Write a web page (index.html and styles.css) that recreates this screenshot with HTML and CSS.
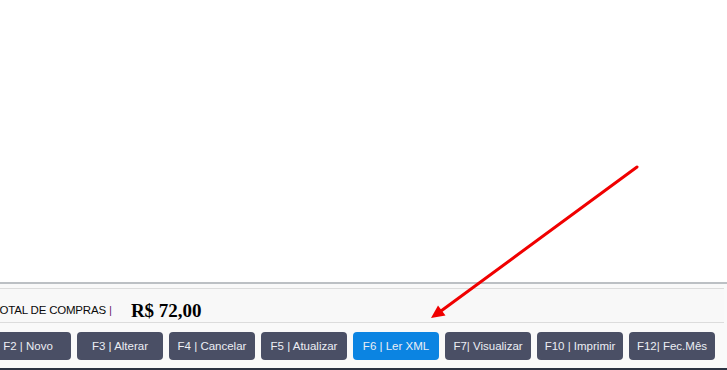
FILE: index.html
```html
<!DOCTYPE html>
<html lang="pt-BR">
<head>
    <meta charset="UTF-8">
    <meta name="viewport" content="width=device-width, initial-scale=1.0">
    <title>Compras</title>
    <link rel="stylesheet" href="styles.css">
</head>
<body>
    <div class="app">
        <div class="grid-area"></div>
        <div class="footer">
            <div class="total">
                <span class="total-label">TOTAL DE COMPRAS</span>
                <span class="sep">|</span>
                <span class="total-value">R$ 72,00</span>
            </div>
            <div class="actions">
                <button class="btn">F2 | Novo</button>
                <button class="btn">F3 | Alterar</button>
                <button class="btn">F4 | Cancelar</button>
                <button class="btn">F5 | Atualizar</button>
                <button class="btn btn-active">F6 | Ler XML</button>
                <button class="btn">F7| Visualizar</button>
                <button class="btn">F10 | Imprimir</button>
                <button class="btn">F12| Fec.Mês</button>
            </div>
        </div>
        <div class="statusbar"></div>
    </div>

    <svg class="arrow" width="727" height="370" viewBox="0 0 727 370">
        <line x1="637" y1="167" x2="441" y2="311" stroke="#f00000" stroke-width="3" stroke-linecap="round"/>
        <polygon points="431,318 438,305.5 445.5,315.5" fill="#f00000"/>
    </svg>
</body>
</html>
```

FILE: styles.css
```css
html, body {
    margin: 0;
    padding: 0;
    background-color: #ffffff;
    overflow: hidden;
}
body {
    position: relative;
    width: 727px;
    height: 370px;
    font-family: "Liberation Sans", Arial, sans-serif;
}
.app {
    margin-left: -15px;
    width: 742px;
}
.grid-area {
    height: 282px;
    background-color: #ffffff;
}
.footer {
    border-top: 2px solid #bcc0c4;
    padding-top: 4px;
    background-color: #f9f9f9;
}
.total {
    display: flex;
    align-items: flex-start;
    height: 33px;
    margin-right: 3px;
    padding-left: 8px;
    border-top: 1px solid #dcdcdc;
    border-bottom: 1px solid #dcdcdc;
    background-color: #f8f8f8;
}
.total-label {
    margin-top: 15px;
    font-size: 11.5px;
    line-height: 13px;
    color: #0a0a0a;
    letter-spacing: -0.2px;
}
.sep {
    margin-top: 15px;
    margin-left: 3px;
    font-size: 11.5px;
    line-height: 13px;
    color: #6e2a6e;
}
.total-value {
    margin-top: 11px;
    margin-left: 19px;
    font-family: "Liberation Serif", "Times New Roman", serif;
    font-weight: bold;
    font-size: 19px;
    line-height: 21px;
    color: #000000;
}
.actions {
    display: flex;
    gap: 6px;
    padding: 9px 0 8px 0;
}
.btn {
    width: 86px;
    height: 28px;
    padding: 0;
    border: none;
    border-radius: 4px;
    background-color: #4a4f65;
    color: #eceef4;
    font-family: "Liberation Sans", Arial, sans-serif;
    font-size: 11.5px;
    text-align: center;
    flex: none;
}
.btn-active {
    background-color: #0b84e2;
}
.statusbar {
    height: 2px;
    background-color: #2c3342;
}
.arrow {
    position: absolute;
    left: 0;
    top: 0;
    pointer-events: none;
}
```
